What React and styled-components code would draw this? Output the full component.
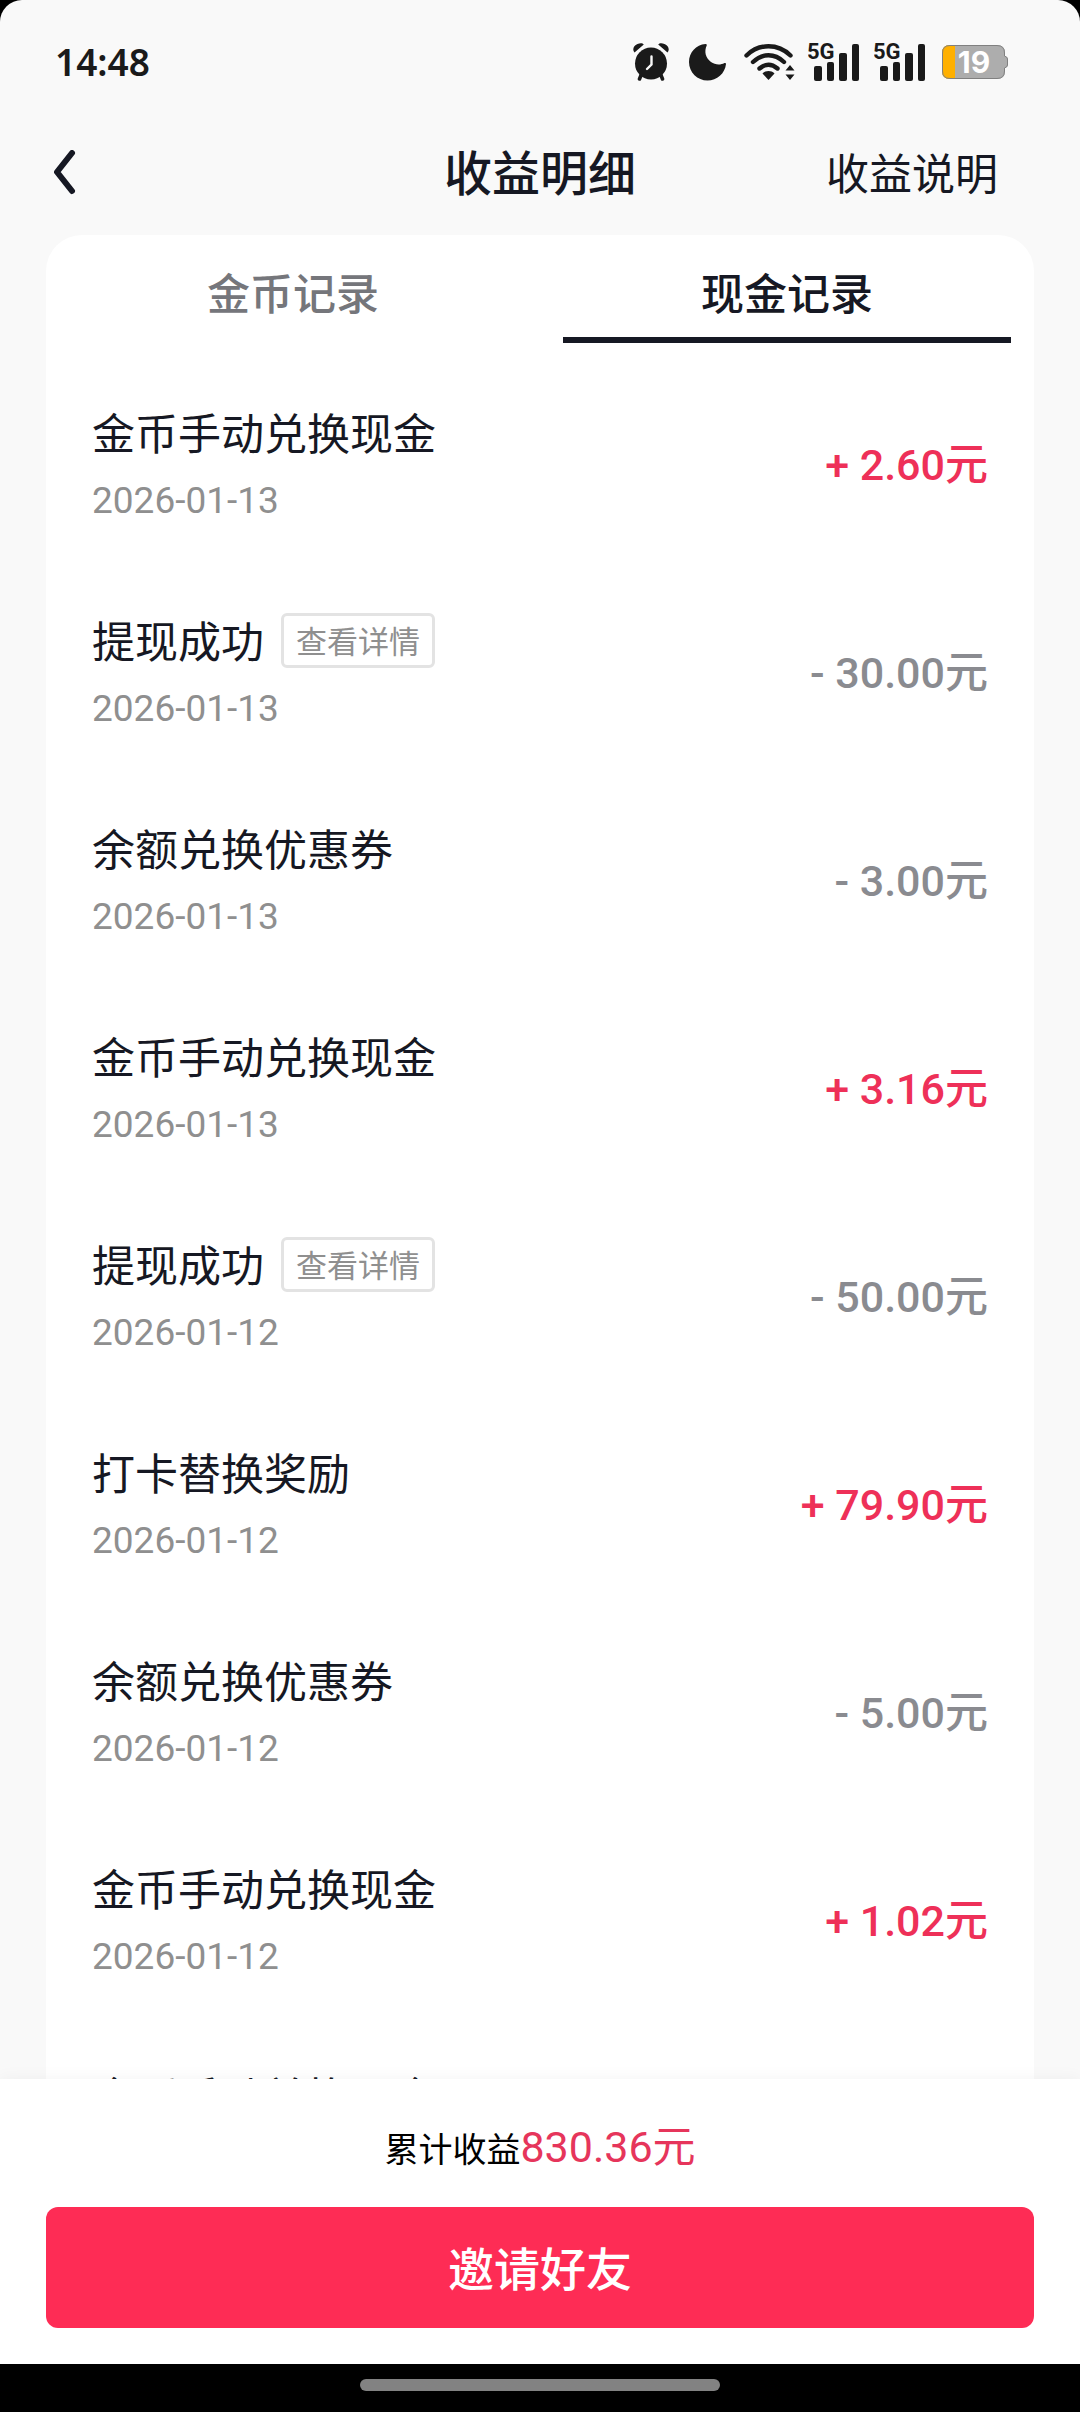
import React, { useState } from 'react';
import styled, { createGlobalStyle } from 'styled-components';

const GlobalStyle = createGlobalStyle`
  * {
    box-sizing: border-box;
  }
  body {
    margin: 0;
    background: #000;
  }
  button {
    padding: 0;
    border: 0;
    background: none;
    font: inherit;
    color: inherit;
    cursor: pointer;
  }
`;

const Screen = styled.div`
  display: flex;
  flex-direction: column;
  height: 100vh;
  overflow: hidden;
  border-radius: 22px 22px 0 0;
  background: #f9f9f9;
  color: #161823;
  font-family: Roboto, 'Noto Sans CJK SC', sans-serif;
  font-size: 43px;
`;

const StatusBar = styled.div`
  flex: none;
  display: flex;
  align-items: center;
  justify-content: space-between;
  height: 124px;
  padding: 0 72px 0 55px;
  color: #1a1a1a;
`;
const Clock = styled.time`
  font-family: 'Noto Sans', sans-serif;
  font-size: 37px;
  font-weight: 600;
  line-height: 48px;
`;
const StatusIcons = styled.div`
  display: flex;
  align-items: center;
`;
const StatusIcon = styled.svg`
  display: block;
  margin-left: ${({ $gap }) => $gap}px;
  fill: currentColor;
`;

const NavBar = styled.header`
  flex: none;
  display: grid;
  grid-template-columns: 1fr auto 1fr;
  align-items: center;
  height: 98px;
  margin-bottom: 13px;
  padding: 0 46px;
`;
const BackButton = styled.button`
  justify-self: start;
  padding: 0 6px;
  line-height: 0;
`;
const PageTitle = styled.h1`
  margin: 0;
  padding-top: 4px;
  font-size: 48px;
  font-weight: 500;
  line-height: 60px;
`;
const HelpLink = styled.a`
  justify-self: end;
  margin-right: 36px;
  padding-top: 4px;
  color: inherit;
  line-height: 60px;
  text-decoration: none;
`;

const Card = styled.main`
  flex: 1;
  display: flex;
  flex-direction: column;
  min-height: 0;
  margin: 0 46px;
  border-radius: 36px 36px 0 0;
  background: #fff;
`;
const Tabs = styled.div`
  flex: none;
  display: grid;
  grid-template-columns: 1fr 1fr;
  gap: 46px;
  padding: 0 23px;
`;
const Tab = styled.button`
  height: 108px;
  padding-top: 18px;
  border-bottom: 6px solid ${({ $active }) => ($active ? '#161823' : 'transparent')};
  color: ${({ $active }) => ($active ? '#161823' : '#75767b')};
  font-weight: 500;
  line-height: 60px;
`;

const RecordList = styled.ul`
  flex: 1;
  min-height: 0;
  margin: 0;
  padding: 18px 46px 0;
  overflow-y: auto;
  scrollbar-width: none;
  list-style: none;
`;
const Record = styled.li`
  display: flex;
  align-items: center;
  justify-content: space-between;
  padding: 44px 0;
`;
const RecordTitle = styled.div`
  display: flex;
  align-items: flex-start;
  gap: 17px;
  height: 60px;
  line-height: 60px;
`;
const DetailButton = styled.button`
  height: 55px;
  padding: 4px 12px 0;
  border: 3px solid #e3e3e3;
  border-radius: 6px;
  color: #8f8f8f;
  font-size: 31px;
  line-height: 45px;
`;
const RecordDate = styled.time`
  display: block;
  margin-top: 12px;
  color: #8f8f8f;
  font-size: 37px;
  line-height: 48px;
`;
const Amount = styled.span`
  color: ${({ $income }) => ($income ? '#ee3058' : '#8a8b90')};
  font-weight: 500;
  line-height: 60px;
`;

const Footer = styled.footer`
  flex: none;
  position: relative;
  padding: 38px 46px 36px;
  background: #fff;
  box-shadow: 0 0 16px rgba(0, 0, 0, 0.05);
`;
const Total = styled.p`
  margin: 0 0 30px;
  color: #e6355b;
  line-height: 60px;
  text-align: center;
`;
const TotalLabel = styled.span`
  color: #000;
  font-size: 34px;
  line-height: 34px;
`;
const InviteButton = styled.button`
  display: block;
  width: 100%;
  height: 121px;
  padding-bottom: 4px;
  border-radius: 12px;
  background: #fe2c55;
  color: #fff;
  font-size: 46px;
  font-weight: 500;
`;

const GestureBar = styled.div`
  flex: none;
  display: flex;
  justify-content: center;
  height: 48px;
  padding-top: 15px;
  background: #000;
`;
const GestureHandle = styled.div`
  width: 360px;
  height: 12px;
  border-radius: 6px;
  background: #828282;
`;

const records = [
  { title: '金币手动兑换现金', date: '2026-01-13', amount: 2.6 },
  { title: '提现成功', date: '2026-01-13', amount: -30, detail: true },
  { title: '余额兑换优惠券', date: '2026-01-13', amount: -3 },
  { title: '金币手动兑换现金', date: '2026-01-13', amount: 3.16 },
  { title: '提现成功', date: '2026-01-12', amount: -50, detail: true },
  { title: '打卡替换奖励', date: '2026-01-12', amount: 79.9 },
  { title: '余额兑换优惠券', date: '2026-01-12', amount: -5 },
  { title: '金币手动兑换现金', date: '2026-01-12', amount: 1.02 },
  { title: '金币手动兑换现金', date: '2026-01-12', amount: 1.2 },
];

const formatAmount = amount =>
  `${amount > 0 ? '+' : '-'} ${Math.abs(amount).toFixed(2)}元`;

const AlarmIcon = () => (
  <StatusIcon width="36" height="38" viewBox="0 0 36 38" $gap={0}>
    <path d="M1.500 9.500C-1 7 .5 2.500 4.500 1 7-.2 9.500-.2 10.800 1.400z M34.500 9.500C37 7 35.500 2.500 31.500 1 29-.2 26.500-.2 25.200 1.400z" />
    <path d="M8.500 31l-2 5M27.500 31l2 5" stroke="currentColor" strokeWidth="3.600" strokeLinecap="round" />
    <circle cx="18" cy="20.500" r="16" />
    <path d="M18.500 13.500v8l-4.500 4.500" fill="none" stroke="#f9f9f9" strokeWidth="2.400" strokeLinecap="round" />
  </StatusIcon>
);

const MoonIcon = () => (
  <StatusIcon width="37" height="38" viewBox="0 0 37 38" $gap={20}>
    <path d="M16.500 1C7 1.500 0 9.500 0 19c0 10.500 8.500 18.500 18.500 18.500 9.500 0 17.500-7 18.500-16.500 0-1-.8-1.400-1.600-.9-3.800 2.200-9.400 2-13.400-1C16.500 15 15 8.500 17.700 2.600c.4-.9-.1-1.700-1.200-1.600z" />
  </StatusIcon>
);

const WifiIcon = () => (
  <StatusIcon width="51" height="38" viewBox="0 0 51 38" $gap={18}>
    <g fill="none" stroke="currentColor" strokeWidth="4.400" strokeLinecap="round">
      <path d="M2.500 12.500C15 .2 34 .2 46.500 12.500" />
      <path d="M9 19C18.500 10 30.500 10 40 19" />
      <path d="M15.500 25.500c6-5 12-5 18 0" />
    </g>
    <path d="M24.500 37l-6-6.500c3.500-3.200 8.500-3.200 12 0z" />
    <path d="M46 22l4.500 5.500h-9z M46 37l4.500-5.500h-9z" />
  </StatusIcon>
);

const SignalIcon = ({ gap }) => (
  <StatusIcon width="52" height="54" viewBox="0 -8 52 54" $gap={gap}>
    <text
      x="-1"
      y="16"
      fontFamily="'Liberation Sans Narrow', Roboto, sans-serif"
      fontSize="22"
      fontWeight="700"
    >
      5G
    </text>
    <rect x="6" y="23" width="8" height="15" rx="2" />
    <rect x="19" y="19" width="7" height="19" rx="2" />
    <rect x="31" y="10" width="8" height="28" rx="2" />
    <rect x="44" y="1" width="7" height="37" rx="2" />
  </StatusIcon>
);

const BatteryIcon = ({ level }) => (
  <StatusIcon width="66" height="34" viewBox="0 0 66 34" $gap={16}>
    <path d="M8 0h47q8 0 8 8v3q3 1 3 3v6q0 2-3 3v3q0 8-8 8H8q-8 0-8-8V8q0-8 8-8z" fill="#adadad" />
    <path d="M13 0H8Q0 0 0 8v18q0 8 8 8h5z" fill="#ffb000" />
    <path
      d="M8 .5h47q7.500 0 7.500 7.500v3q3 1 3 3v6q0 2-3 3v3q0 7.500-7.500 7.500H8Q.5 33.500 .5 26V8Q.5 .5 8 .5z"
      fill="none"
      stroke="#808080"
    />
    <text
      x="32"
      y="28"
      fill="#fff"
      fontFamily="Inter, sans-serif"
      fontSize="30"
      fontWeight="700"
      textAnchor="middle"
    >
      {level}
    </text>
  </StatusIcon>
);

export default function App() {
  const [tab, setTab] = useState('cash');

  return (
    <>
      <GlobalStyle />
      <Screen>
        <StatusBar>
          <Clock>14:48</Clock>
          <StatusIcons>
            <AlarmIcon />
            <MoonIcon />
            <WifiIcon />
            <SignalIcon gap={13} />
            <SignalIcon gap={14} />
            <BatteryIcon level={19} />
          </StatusIcons>
        </StatusBar>

        <NavBar>
          <BackButton aria-label="返回">
            <svg width="24" height="46" viewBox="0 0 24 46" fill="none">
              <path
                d="M20 3L5 22l15 19"
                stroke="#161823"
                strokeWidth="6"
                strokeLinecap="round"
                strokeLinejoin="round"
              />
            </svg>
          </BackButton>
          <PageTitle>收益明细</PageTitle>
          <HelpLink href="#help">收益说明</HelpLink>
        </NavBar>

        <Card>
          <Tabs role="tablist">
            <Tab
              role="tab"
              aria-selected={tab === 'coin'}
              $active={tab === 'coin'}
              onClick={() => setTab('coin')}
            >
              金币记录
            </Tab>
            <Tab
              role="tab"
              aria-selected={tab === 'cash'}
              $active={tab === 'cash'}
              onClick={() => setTab('cash')}
            >
              现金记录
            </Tab>
          </Tabs>
          <RecordList>
            {records.map((record, index) => (
              <Record key={index}>
                <div>
                  <RecordTitle>
                    {record.title}
                    {record.detail && <DetailButton>查看详情</DetailButton>}
                  </RecordTitle>
                  <RecordDate>{record.date}</RecordDate>
                </div>
                <Amount $income={record.amount > 0}>{formatAmount(record.amount)}</Amount>
              </Record>
            ))}
          </RecordList>
        </Card>

        <Footer>
          <Total>
            <TotalLabel>累计收益</TotalLabel>830.36元
          </Total>
          <InviteButton>邀请好友</InviteButton>
        </Footer>
        <GestureBar>
          <GestureHandle />
        </GestureBar>
      </Screen>
    </>
  );
}
